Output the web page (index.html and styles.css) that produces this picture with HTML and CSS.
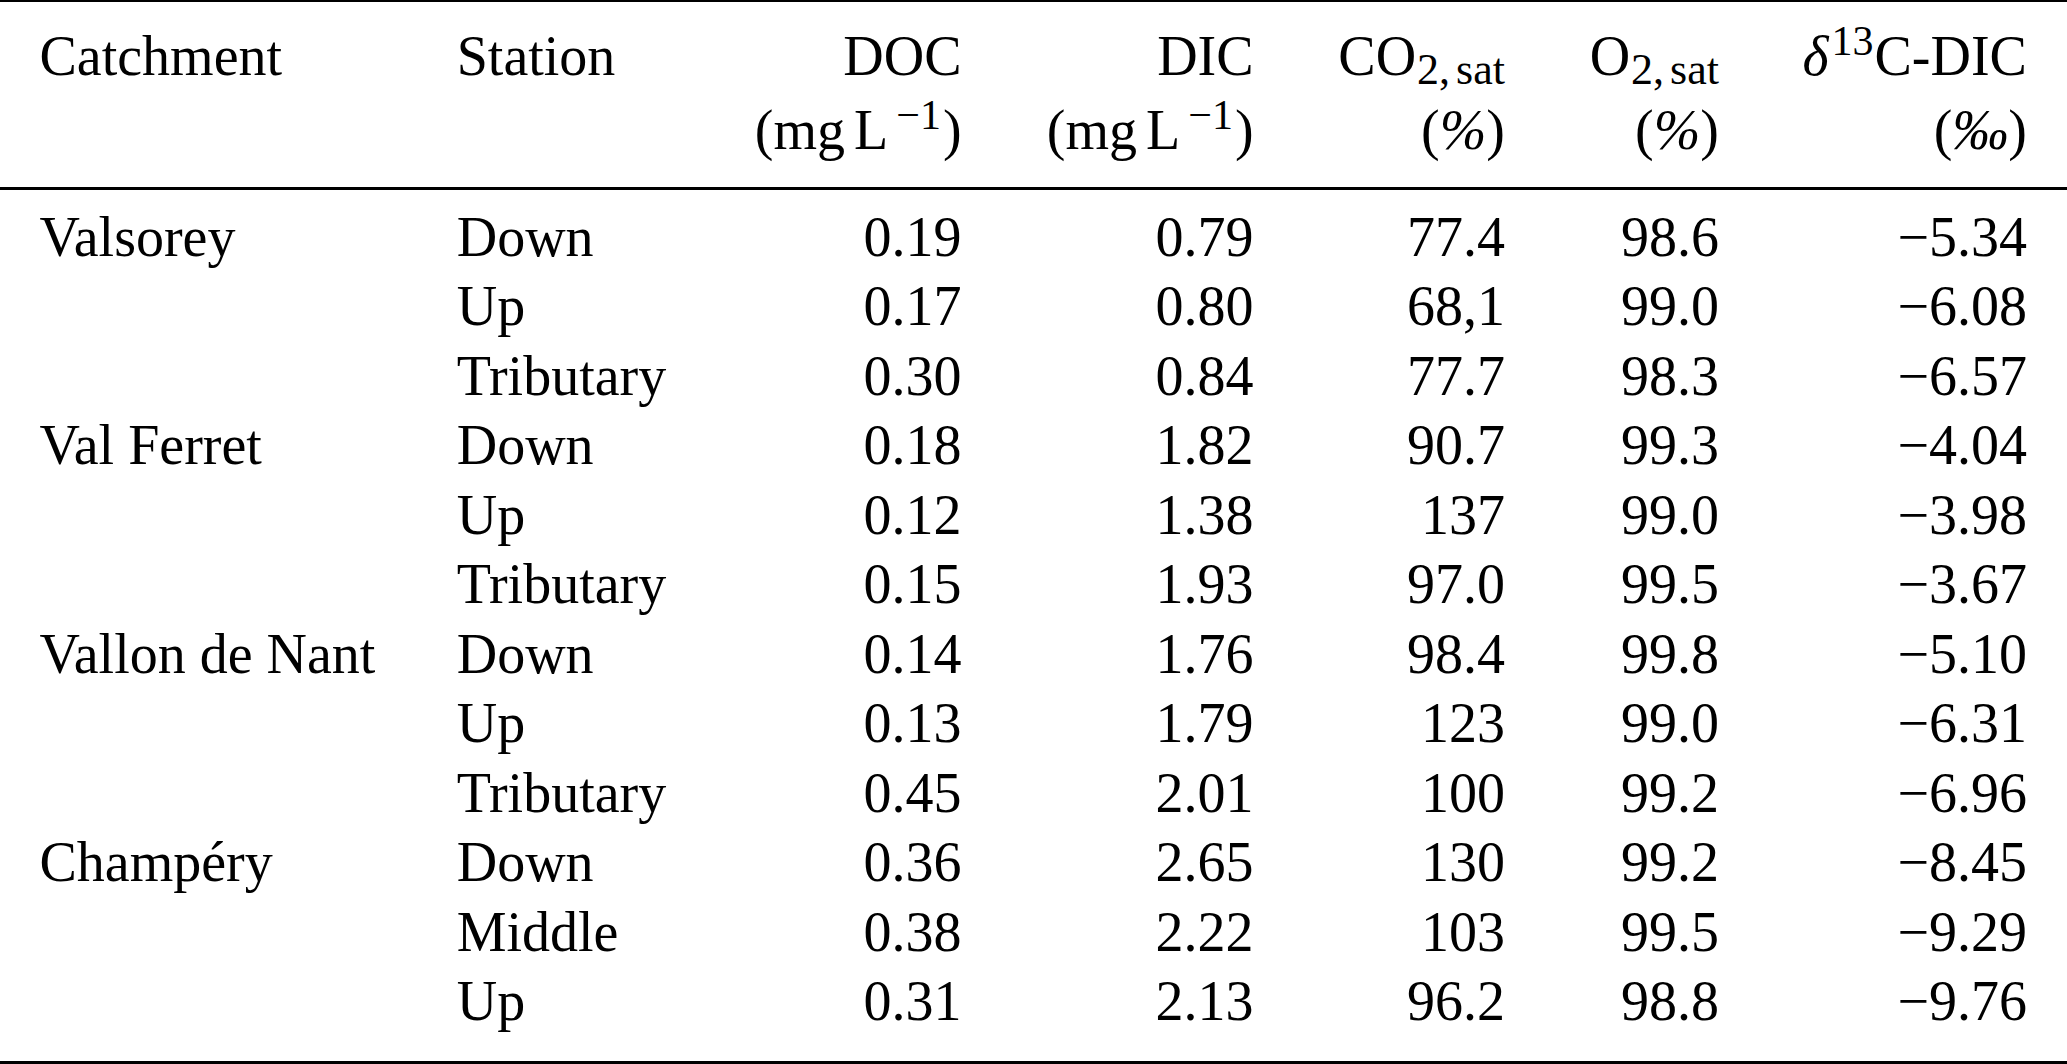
FILE: index.html
```html
<!DOCTYPE html>
<html lang="en">
<head>
<meta charset="utf-8">
<title>Catchment chemistry table</title>
<link rel="stylesheet" href="styles.css">
</head>
<body>
<div class="tbl">
  <div class="rule rule-top"></div>
  <div class="thead">
    <div class="row row-h1">
      <div class="c1">Catchment</div>
      <div class="c2">Station</div>
      <div class="num">DOC</div>
      <div class="num">DIC</div>
      <div class="num">CO<span class="sub">2,<span class="mthin"></span>sat</span></div>
      <div class="num">O<span class="sub">2,<span class="mthin"></span>sat</span></div>
      <div class="num"><i class="delta">δ</i><span class="sup sup-iso">13</span>C-DIC</div>
    </div>
    <div class="row row-h2">
      <div class="c1"></div>
      <div class="c2"></div>
      <div class="num">(mg<span class="thin"></span>L<span class="sup sup-neg">−1</span>)</div>
      <div class="num">(mg<span class="thin"></span>L<span class="sup sup-neg">−1</span>)</div>
      <div class="num">(<i>%</i>)</div>
      <div class="num">(<i>%</i>)</div>
      <div class="num">(<i>‰</i>)</div>
    </div>
  </div>
  <div class="rule rule-mid"></div>
  <div class="tbody">
    <div class="row"><div class="c1">Valsorey</div><div class="c2">Down</div><div class="num">0.19</div><div class="num">0.79</div><div class="num">77.4</div><div class="num">98.6</div><div class="num">−5.34</div></div>
    <div class="row"><div class="c1"></div><div class="c2">Up</div><div class="num">0.17</div><div class="num">0.80</div><div class="num">68,1</div><div class="num">99.0</div><div class="num">−6.08</div></div>
    <div class="row"><div class="c1"></div><div class="c2">Tributary</div><div class="num">0.30</div><div class="num">0.84</div><div class="num">77.7</div><div class="num">98.3</div><div class="num">−6.57</div></div>
    <div class="row"><div class="c1">Val Ferret</div><div class="c2">Down</div><div class="num">0.18</div><div class="num">1.82</div><div class="num">90.7</div><div class="num">99.3</div><div class="num">−4.04</div></div>
    <div class="row"><div class="c1"></div><div class="c2">Up</div><div class="num">0.12</div><div class="num">1.38</div><div class="num">137</div><div class="num">99.0</div><div class="num">−3.98</div></div>
    <div class="row"><div class="c1"></div><div class="c2">Tributary</div><div class="num">0.15</div><div class="num">1.93</div><div class="num">97.0</div><div class="num">99.5</div><div class="num">−3.67</div></div>
    <div class="row"><div class="c1">Vallon de Nant</div><div class="c2">Down</div><div class="num">0.14</div><div class="num">1.76</div><div class="num">98.4</div><div class="num">99.8</div><div class="num">−5.10</div></div>
    <div class="row"><div class="c1"></div><div class="c2">Up</div><div class="num">0.13</div><div class="num">1.79</div><div class="num">123</div><div class="num">99.0</div><div class="num">−6.31</div></div>
    <div class="row"><div class="c1"></div><div class="c2">Tributary</div><div class="num">0.45</div><div class="num">2.01</div><div class="num">100</div><div class="num">99.2</div><div class="num">−6.96</div></div>
    <div class="row"><div class="c1">Champéry</div><div class="c2">Down</div><div class="num">0.36</div><div class="num">2.65</div><div class="num">130</div><div class="num">99.2</div><div class="num">−8.45</div></div>
    <div class="row"><div class="c1"></div><div class="c2">Middle</div><div class="num">0.38</div><div class="num">2.22</div><div class="num">103</div><div class="num">99.5</div><div class="num">−9.29</div></div>
    <div class="row"><div class="c1"></div><div class="c2">Up</div><div class="num">0.31</div><div class="num">2.13</div><div class="num">96.2</div><div class="num">98.8</div><div class="num">−9.76</div></div>
  </div>
  <div class="rule rule-bottom"></div>
</div>
</body>
</html>
```

FILE: styles.css
```css
html, body {
  margin: 0;
  padding: 0;
  background: #fff;
}

body {
  font-family: "Liberation Serif", "Times New Roman", serif;
  font-size: 56px;
  color: #000;
}

.tbl {
  width: 2067px;
  display: flex;
  flex-direction: column;
}

.rule {
  background: #000;
  width: 100%;
}

.rule-top { height: 2px; }
.rule-mid { height: 3px; }
.rule-bottom { height: 3px; }

.thead {
  padding-top: 18px;
  padding-bottom: 19.4px;
}

.thead .row-h1 {
  line-height: 72.6px;
}

.thead .row-h2 {
  line-height: 75px;
}

.tbody {
  padding-top: 13px;
  padding-bottom: 24px;
}

.tbody .row {
  line-height: 69.5px;
}

.row {
  display: grid;
  grid-template-columns: 456.7px 250px 254.9px 292px 251.4px 214px 308px 1fr;
  white-space: nowrap;
}

.c1 {
  padding-left: 39.5px;
}

.num {
  text-align: right;
}

.sub {
  font-size: 44px;
  line-height: 0;
  vertical-align: -9px;
  margin-left: 1px;
}

.mthin {
  display: inline-block;
  width: 6px;
}

.sup {
  font-size: 42px;
  line-height: 0;
  vertical-align: 20px;
}

.sup-iso {
  margin-left: 3px;
  margin-right: 1px;
}

.sup-neg {
  margin-left: 8px;
  margin-right: 2px;
}

.thin {
  display: inline-block;
  width: 9px;
}

.delta {
  font-style: italic;
}
```
